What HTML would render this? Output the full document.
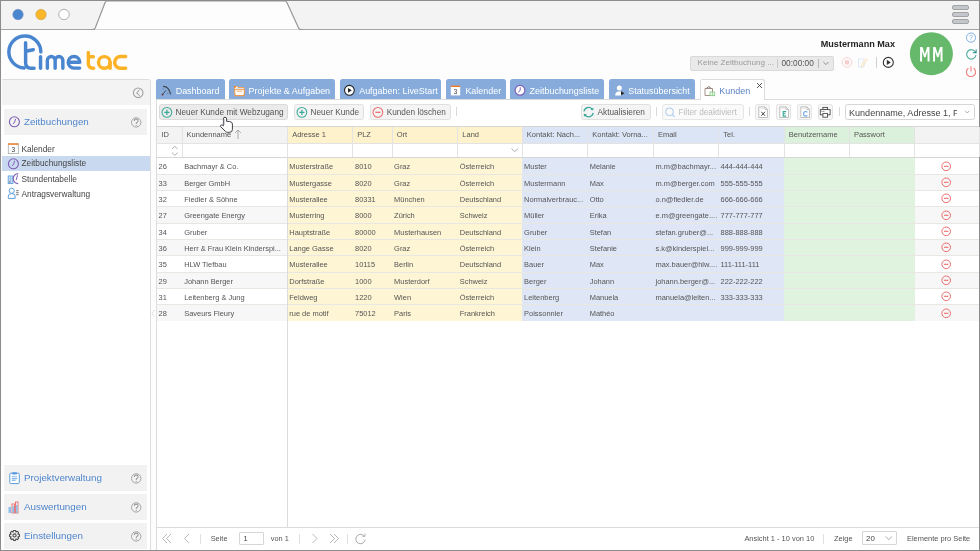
<!DOCTYPE html>
<html><head><meta charset="utf-8"><style>
html,body{margin:0;padding:0;}
body{width:980px;height:551px;position:relative;overflow:hidden;background:#fff;font-family:"Liberation Sans", sans-serif;}
.b{position:absolute;}
.t{position:absolute;white-space:nowrap;}
#w{position:absolute;left:0;top:0;width:980px;height:551px;will-change:transform;}
</style></head><body><div id="w">
<div class="b" style="left:0.00px;top:0.00px;width:980.00px;height:551.00px;background:#fdfdfd;"></div>
<div class="b" style="left:0.00px;top:0.00px;width:980.00px;height:30.00px;background:#f3f3f3;"></div>
<div class="b" style="left:0.00px;top:28.80px;width:980.00px;height:1.20px;background:#a4a4a4;"></div>
<svg class="b" style="left:0.00px;top:0.00px" width="980" height="31" viewBox="0 0 980 31"><path d="M93.5 29.5 L105.5 1 L286 1 L300 29.5 Z" fill="#fdfdfd"/><path d="M91 29.5 L93 29.5 Q94.5 29.5 95.2 28 L105.2 2.2 Q105.8 1 107 1 L285 1 Q286.2 1 286.8 2.2 L298.6 28 Q299.3 29.5 301 29.5 L303 29.5" fill="none" stroke="#969696" stroke-width="1.2"/></svg>
<div class="b" style="left:0.00px;top:0.00px;width:980.00px;height:1.30px;background:#8c8c8c;"></div>
<div class="b" style="left:0.00px;top:0.00px;width:1.30px;height:551.00px;background:#8c8c8c;"></div>
<div class="b" style="left:978.70px;top:0.00px;width:1.30px;height:551.00px;background:#8c8c8c;"></div>
<div class="b" style="left:0.00px;top:549.70px;width:980.00px;height:1.30px;background:#8c8c8c;"></div>
<svg class="b" style="left:8.00px;top:4.00px" width="70" height="22" viewBox="0 0 70 22"><circle cx="10" cy="10.5" r="5.2" fill="#4a86cf" stroke="#6f8fb8" stroke-width="0.6"/><circle cx="33" cy="10.5" r="5.2" fill="#fbb72a" stroke="#c9a050" stroke-width="0.6"/><circle cx="56" cy="10.5" r="5.2" fill="#fff" stroke="#9a9a9a" stroke-width="0.8"/></svg>
<div class="b" style="left:952.00px;top:5.30px;width:17.00px;height:4.60px;background:#c4c7cc;border:1px solid #a3a3a3;border-radius:2px;box-sizing:border-box;"></div>
<div class="b" style="left:952.00px;top:12.20px;width:17.00px;height:4.60px;background:#c4c7cc;border:1px solid #a3a3a3;border-radius:2px;box-sizing:border-box;"></div>
<div class="b" style="left:952.00px;top:19.20px;width:17.00px;height:4.60px;background:#c4c7cc;border:1px solid #a3a3a3;border-radius:2px;box-sizing:border-box;"></div>
<svg class="b" style="left:0;top:0" width="140" height="80" viewBox="0 0 140 80"><g fill="none" stroke-width="3.45" stroke-linecap="round" stroke-linejoin="round"><path stroke="#4a86cf" d="M40.85 51.9 A16 16 0 1 0 24.2 67.95"/><path stroke="#4a86cf" d="M25.6 42.8 L25.6 62.8 Q25.6 68.2 31 68.2 L34.1 68.2 M25.6 51.3 L33.3 49.7"/><path stroke="#4a86cf" d="M40.55 56.8 L40.55 68.2"/><path stroke="#4a86cf" d="M47.35 68.2 L47.35 60.4 A3.9 3.9 0 0 1 55.15 60.4 L55.15 68.2 M55.15 60.4 A3.85 3.85 0 0 1 62.85 60.4 L62.85 68.2"/><path stroke="#4a86cf" d="M68.2 62.3 L79.8 62.3 A5.8 5.8 0 1 0 74 68.1 L79.6 68.1"/><path stroke="#fbb225" d="M88.35 52.4 L88.35 63.3 Q88.35 68.3 93.3 68.3 L93.7 68.3 M88.35 56.8 L93.4 56.8"/><circle stroke="#fbb225" cx="104.3" cy="62.4" r="5.8"/><path stroke="#fbb225" d="M110.1 62.4 L110.1 68.2"/><path stroke="#fbb225" d="M125.65 56.55 L120.5 56.55 A5.85 5.85 0 0 0 120.5 68.25 L125.65 68.25"/></g></svg>
<div class="t" style="left:820.70px;top:39.60px;font-size:9.100px;line-height:9.100px;color:#222;font-weight:bold;">Mustermann Max</div>
<div class="b" style="left:690.40px;top:55.70px;width:143.60px;height:14.90px;background:#e9e9e9;border:1px solid #d9d9d9;border-radius:2px;box-sizing:border-box;"></div>
<div class="t" style="left:697.60px;top:59.34px;font-size:8.100px;line-height:8.100px;color:#9a9a9a;font-weight:normal;">Keine Zeitbuchung ...</div>
<div class="b" style="left:777.20px;top:58.50px;width:0.80px;height:9.50px;background:#c8c8c8;"></div>
<div class="t" style="left:781.50px;top:59.17px;font-size:8.300px;line-height:8.300px;color:#555;font-weight:normal;">00:00:00</div>
<div class="b" style="left:817.50px;top:58.50px;width:1.00px;height:9.50px;background:#b8b8b8;"></div>
<svg class="b" style="left:821.00px;top:59.00px" width="10" height="8" viewBox="0 0 10 8"><path d="M2.4 3 L5 5.6 L7.6 3" fill="none" stroke="#888" stroke-width="0.9"/></svg>
<svg class="b" style="left:841.00px;top:56.00px" width="12" height="12" viewBox="0 0 12 12"><circle cx="6" cy="6.4" r="4.8" fill="none" stroke="#f8cccc" stroke-width="0.9"/><rect x="3.9" y="4.3" width="4.2" height="4.2" fill="#f8cccc"/></svg>
<svg class="b" style="left:856.00px;top:56.00px" width="13" height="13" viewBox="0 0 13 13"><path d="M2.5 3 L8 3 L8 11 L2.5 11 Z" fill="none" stroke="#dae8f6" stroke-width="0.9"/><path d="M5 10 L10 2.5 L11.5 3.5 L6.5 11 Z" fill="none" stroke="#f8e2b4" stroke-width="0.9"/></svg>
<div class="b" style="left:875.50px;top:57.00px;width:1.00px;height:11.00px;background:#d0d0d0;"></div>
<svg class="b" style="left:882.00px;top:56.00px" width="13" height="13" viewBox="0 0 13 13"><circle cx="6.3" cy="6.4" r="5" fill="none" stroke="#333" stroke-width="1.1"/><path d="M4.8 3.8 L8.8 6.4 L4.8 9 Z" fill="#333"/></svg>
<svg class="b" style="left:909.00px;top:32.00px" width="45" height="45" viewBox="0 0 45 45"><circle cx="22.4" cy="21.7" r="21.5" fill="#66b96a"/></svg>
<svg class="b" style="left:0;top:0" width="980" height="80" viewBox="0 0 980 80"><path fill="#fff" d="M920.10 61.60 L920.10 46.90 L922.50 46.90 L924.80 54.20 L927.10 46.90 L929.50 46.90 L929.50 61.60 L927.55 61.60 L927.55 51.20 L925.55 57.20 L924.05 57.20 L922.05 51.20 L922.05 61.60 Z M933.10 61.60 L933.10 46.90 L935.50 46.90 L937.80 54.20 L940.10 46.90 L942.50 46.90 L942.50 61.60 L940.55 61.60 L940.55 51.20 L938.55 57.20 L937.05 57.20 L935.05 51.20 L935.05 61.60 Z"/></svg>
<svg class="b" style="left:964.00px;top:30.00px" width="14" height="50" viewBox="0 0 14 50"><circle cx="7" cy="7.6" r="4.6" fill="none" stroke="#7db0e6" stroke-width="1"/><text x="7" y="10.3" font-size="7" text-anchor="middle" fill="#7db0e6" font-family="Liberation Sans">?</text><path d="M12 25.1 A4.7 4.7 0 1 1 11.15 21.6" fill="none" stroke="#4aaa9c" stroke-width="1.1"/><path d="M8.8 22.6 L12.2 22.6 L12.2 19.2" fill="none" stroke="#4aaa9c" stroke-width="1.1"/><circle cx="11.6" cy="22.1" r="0.7" fill="#1a5a80"/><path d="M4.4 38.3 A4.6 4.6 0 1 0 9.6 38.3" fill="none" stroke="#ef7f7f" stroke-width="1.1"/><path d="M7 36.2 L7 41.5" stroke="#ef7f7f" stroke-width="1.1"/></svg>
<div class="b" style="left:1.50px;top:79.30px;width:149.00px;height:470.70px;background:#fff;border-top:1px solid #dedede;border-right:1px solid #dedede;border-top-right-radius:3px;box-sizing:border-box;"></div>
<div class="b" style="left:1.50px;top:80.30px;width:148.00px;height:24.90px;background:#f3f3f3;"></div>
<svg class="b" style="left:131.00px;top:86.00px" width="14" height="14" viewBox="0 0 14 14"><circle cx="7.2" cy="6.8" r="4.8" fill="none" stroke="#a0a0a0" stroke-width="1.05"/><path d="M8.6 3.9 L5.6 6.85 L8.6 9.7" fill="none" stroke="#8a8a8a" stroke-width="1"/></svg>
<div class="b" style="left:4.00px;top:108.80px;width:143.00px;height:25.80px;background:#f2f2f2;"></div>
<div class="t" style="left:24.00px;top:117.00px;font-size:9.800px;line-height:9.800px;color:#4f86cc;font-weight:normal;">Zeitbuchungen</div>
<svg class="b" style="left:129.00px;top:114.70px" width="14" height="14" viewBox="0 0 14 14"><circle cx="7.2" cy="7.4" r="4.7" fill="none" stroke="#a5a5a5" stroke-width="1"/><path d="M5.3 5.9 Q5.3 4.1 7.2 4.1 Q9.1 4.1 9.1 5.8 Q9.1 6.9 7.9 7.5 Q7.2 7.9 7.2 8.9" fill="none" stroke="#999" stroke-width="1.05"/><circle cx="7.2" cy="10.3" r="0.65" fill="#999"/></svg>
<svg class="b" style="left:7.00px;top:114.70px" width="16" height="14" viewBox="0 0 16 14"><circle cx="7.4" cy="6.8" r="5" fill="none" stroke="#7e5fb5" stroke-width="1.1"/><path d="M8.5 3.8 Q8.3 6.8 6.3 8.9" fill="none" stroke="#7e5fb5" stroke-width="1"/></svg>
<div class="b" style="left:4.00px;top:465.10px;width:143.00px;height:26.10px;background:#f2f2f2;"></div>
<div class="t" style="left:24.00px;top:473.45px;font-size:9.800px;line-height:9.800px;color:#4f86cc;font-weight:normal;">Projektverwaltung</div>
<svg class="b" style="left:129.00px;top:471.15px" width="14" height="14" viewBox="0 0 14 14"><circle cx="7.2" cy="7.4" r="4.7" fill="none" stroke="#a5a5a5" stroke-width="1"/><path d="M5.3 5.9 Q5.3 4.1 7.2 4.1 Q9.1 4.1 9.1 5.8 Q9.1 6.9 7.9 7.5 Q7.2 7.9 7.2 8.9" fill="none" stroke="#999" stroke-width="1.05"/><circle cx="7.2" cy="10.3" r="0.65" fill="#999"/></svg>
<svg class="b" style="left:7.00px;top:471.15px" width="16" height="14" viewBox="0 0 16 14"><rect x="2.8" y="2.2" width="9.5" height="10.4" rx="1" fill="#fff" stroke="#5b9be0" stroke-width="1"/><rect x="5.2" y="1.2" width="4.7" height="2.3" rx="0.5" fill="#5b9be0"/><path d="M4.8 5.8 H10.3 M4.8 7.6 H10.3 M4.8 9.4 H8.5" stroke="#8ab8ea" stroke-width="1.1"/></svg>
<div class="b" style="left:4.00px;top:493.70px;width:143.00px;height:26.30px;background:#f2f2f2;"></div>
<div class="t" style="left:24.00px;top:502.15px;font-size:9.800px;line-height:9.800px;color:#4f86cc;font-weight:normal;">Auswertungen</div>
<svg class="b" style="left:129.00px;top:499.85px" width="14" height="14" viewBox="0 0 14 14"><circle cx="7.2" cy="7.4" r="4.7" fill="none" stroke="#a5a5a5" stroke-width="1"/><path d="M5.3 5.9 Q5.3 4.1 7.2 4.1 Q9.1 4.1 9.1 5.8 Q9.1 6.9 7.9 7.5 Q7.2 7.9 7.2 8.9" fill="none" stroke="#999" stroke-width="1.05"/><circle cx="7.2" cy="10.3" r="0.65" fill="#999"/></svg>
<svg class="b" style="left:7.00px;top:499.85px" width="16" height="14" viewBox="0 0 16 14"><rect x="1.5" y="7" width="2.5" height="6" fill="#8fc0ea" /><rect x="5" y="4" width="2.5" height="9" fill="none" stroke="#ee6a6a" stroke-width="0.9"/><rect x="8.5" y="2" width="2.5" height="11" fill="none" stroke="#ee6a6a" stroke-width="0.9"/><rect x="5.4" y="6" width="1.7" height="7" fill="#8fc0ea"/><rect x="8.9" y="5" width="1.7" height="8" fill="#8fc0ea"/></svg>
<div class="b" style="left:4.00px;top:522.60px;width:143.00px;height:26.90px;background:#f2f2f2;"></div>
<div class="t" style="left:24.00px;top:531.35px;font-size:9.800px;line-height:9.800px;color:#4f86cc;font-weight:normal;">Einstellungen</div>
<svg class="b" style="left:129.00px;top:529.05px" width="14" height="14" viewBox="0 0 14 14"><circle cx="7.2" cy="7.4" r="4.7" fill="none" stroke="#a5a5a5" stroke-width="1"/><path d="M5.3 5.9 Q5.3 4.1 7.2 4.1 Q9.1 4.1 9.1 5.8 Q9.1 6.9 7.9 7.5 Q7.2 7.9 7.2 8.9" fill="none" stroke="#999" stroke-width="1.05"/><circle cx="7.2" cy="10.3" r="0.65" fill="#999"/></svg>
<svg class="b" style="left:7.00px;top:529.05px" width="16" height="14" viewBox="0 0 16 14"><path d="M10.91 4.95 L12.44 5.50 L12.44 7.40 L10.91 7.95 L10.98 7.78 L11.68 9.25 L10.33 10.60 L8.86 9.90 L9.03 9.83 L8.48 11.36 L6.58 11.36 L6.03 9.83 L6.20 9.90 L4.73 10.60 L3.38 9.25 L4.08 7.78 L4.15 7.95 L2.62 7.40 L2.62 5.50 L4.15 4.95 L4.08 5.12 L3.38 3.65 L4.73 2.30 L6.20 3.00 L6.03 3.07 L6.58 1.54 L8.48 1.54 L9.03 3.07 L8.86 3.00 L10.33 2.30 L11.68 3.65 L10.98 5.12 Z" fill="none" stroke="#4a4a4a" stroke-width="1.1" stroke-linejoin="round"/><circle cx="7.53" cy="6.45" r="1.6" fill="none" stroke="#4a4a4a" stroke-width="1.1"/></svg>
<div class="b" style="left:1.50px;top:156.00px;width:148.50px;height:15.00px;background:#c9daf0;"></div>
<div class="t" style="left:21.50px;top:144.97px;font-size:8.300px;line-height:8.300px;color:#444;font-weight:normal;">Kalender</div>
<div class="t" style="left:21.50px;top:159.47px;font-size:8.300px;line-height:8.300px;color:#444;font-weight:normal;">Zeitbuchungsliste</div>
<div class="t" style="left:21.50px;top:174.67px;font-size:8.300px;line-height:8.300px;color:#444;font-weight:normal;">Stundentabelle</div>
<div class="t" style="left:21.50px;top:190.17px;font-size:8.300px;line-height:8.300px;color:#444;font-weight:normal;">Antragsverwaltung</div>
<svg class="b" style="left:7.00px;top:142.00px" width="13" height="13" viewBox="0 0 13 13"><rect x="1.3" y="1.8" width="10" height="9.8" fill="#fff" stroke="#aaa" stroke-width="0.8"/><rect x="1" y="1.3" width="10.6" height="1.6" fill="#f08a3c"/><text x="6.3" y="10" font-size="6.5" text-anchor="middle" fill="#333" font-family="Liberation Sans">3</text></svg>
<svg class="b" style="left:6.00px;top:156.80px" width="14" height="14" viewBox="0 0 14 14"><circle cx="7.4" cy="6.8" r="5" fill="none" stroke="#7e5fb5" stroke-width="1.1"/><path d="M8.5 3.8 Q8.3 6.8 6.3 8.9" fill="none" stroke="#7e5fb5" stroke-width="1"/></svg>
<svg class="b" style="left:6.00px;top:171.00px" width="16" height="14" viewBox="0 0 16 14"><rect x="2.2" y="5" width="4.8" height="7.5" fill="#cfe3f6" stroke="#5ea0e0" stroke-width="0.9"/><path d="M2.2 7.6 H7 M2.2 10 H7 M4.6 5 V12.5" stroke="#8ab8e8" stroke-width="0.6"/><rect x="3" y="10.3" width="1.4" height="1.5" fill="#9a8f80"/><path d="M12.2 2.6 A5 5 0 0 0 12.2 12.6" fill="none" stroke="#7e5fb5" stroke-width="1.1"/><path d="M11.5 4.2 L10.2 9" fill="none" stroke="#7e5fb5" stroke-width="1"/></svg>
<svg class="b" style="left:6.00px;top:186.00px" width="16" height="14" viewBox="0 0 16 14"><circle cx="5.7" cy="4.8" r="2.6" fill="none" stroke="#5ea0e0" stroke-width="1"/><path d="M2.3 12.4 L2.3 10 Q2.3 7.6 5.7 7.6 Q9.1 7.6 9.1 10 L9.1 12.4 Z" fill="none" stroke="#5ea0e0" stroke-width="1"/><path d="M10.2 4.6 H12.6 M10.2 6.6 H12.6 M10.2 8.6 H12.6" stroke="#8a8a8a" stroke-width="1.1"/></svg>
<div class="b" style="left:156.00px;top:79.40px;width:69.00px;height:20.10px;background:#87acdb;border-radius:2.5px 2.5px 0 0;"></div>
<div class="t" style="left:175.70px;top:87.02px;font-size:8.950px;line-height:8.950px;color:#fff;font-weight:normal;">Dashboard</div>
<div class="b" style="left:229.00px;top:79.40px;width:106.20px;height:20.10px;background:#87acdb;border-radius:2.5px 2.5px 0 0;"></div>
<div class="t" style="left:248.60px;top:87.02px;font-size:8.950px;line-height:8.950px;color:#fff;font-weight:normal;">Projekte &amp; Aufgaben</div>
<div class="b" style="left:339.70px;top:79.40px;width:101.20px;height:20.10px;background:#87acdb;border-radius:2.5px 2.5px 0 0;"></div>
<div class="t" style="left:359.20px;top:87.02px;font-size:8.950px;line-height:8.950px;color:#fff;font-weight:normal;">Aufgaben: LiveStart</div>
<div class="b" style="left:445.50px;top:79.40px;width:60.40px;height:20.10px;background:#87acdb;border-radius:2.5px 2.5px 0 0;"></div>
<div class="t" style="left:465.40px;top:87.02px;font-size:8.950px;line-height:8.950px;color:#fff;font-weight:normal;">Kalender</div>
<div class="b" style="left:510.00px;top:79.40px;width:94.40px;height:20.10px;background:#87acdb;border-radius:2.5px 2.5px 0 0;"></div>
<div class="t" style="left:529.60px;top:87.02px;font-size:8.950px;line-height:8.950px;color:#fff;font-weight:normal;">Zeitbuchungsliste</div>
<div class="b" style="left:609.00px;top:79.40px;width:85.80px;height:20.10px;background:#87acdb;border-radius:2.5px 2.5px 0 0;"></div>
<div class="t" style="left:628.20px;top:87.02px;font-size:8.950px;line-height:8.950px;color:#fff;font-weight:normal;">Statusübersicht</div>
<svg class="b" style="left:159.00px;top:83.00px" width="14" height="14" viewBox="0 0 14 14"><path d="M4.5 3.3 Q9.5 3.5 11.6 10.8" fill="none" stroke="#3f4650" stroke-width="1.2" stroke-linecap="round"/><path d="M3.5 11.6 L7 7.3" stroke="#3a3f48" stroke-width="0.9"/><circle cx="3.5" cy="11.6" r="0.9" fill="#5a2a20"/><circle cx="4" cy="6" r="0.5" fill="#556"/><circle cx="8.8" cy="10.5" r="0.5" fill="#556"/></svg>
<svg class="b" style="left:232.00px;top:83.00px" width="14" height="15" viewBox="0 0 14 15"><path d="M2.6 3.6 L5.2 3.6 L6 4.5 L12 4.5 L12 7 L2.6 7 Z" fill="#fff" stroke="#f0a050" stroke-width="0.9"/><path d="M4.2 5.7 H11" stroke="#c8c8c8" stroke-width="0.7"/><path d="M2.4 6.8 L12.6 6.8 L11.9 12.6 L3.1 12.6 Z" fill="#fff" stroke="#ec9a50" stroke-width="1.1"/><path d="M5 8.6 H10" stroke="#f2b070" stroke-width="0.9"/><circle cx="2.9" cy="4" r="0.9" fill="#f57a1f"/></svg>
<svg class="b" style="left:343.00px;top:84.00px" width="13" height="13" viewBox="0 0 13 13"><circle cx="6.4" cy="6.3" r="4.9" fill="#fff" stroke="#222" stroke-width="1.1"/><path d="M5 3.9 L8.8 6.3 L5 8.7 Z" fill="#222"/></svg>
<svg class="b" style="left:449.00px;top:84.00px" width="13" height="13" viewBox="0 0 13 13"><rect x="1.8" y="2.4" width="9.4" height="9" fill="#fff"/><rect x="1.8" y="1.6" width="9.4" height="1.4" fill="#f07a2a"/><text x="6.5" y="10.2" font-size="6.3" text-anchor="middle" fill="#333" font-family="Liberation Sans">3</text></svg>
<svg class="b" style="left:513.00px;top:83.00px" width="14" height="14" viewBox="0 0 14 14"><circle cx="7" cy="7.3" r="4.9" fill="#fff" stroke="#7e5fb5" stroke-width="1.2"/><path d="M7.3 4.3 L7.1 7.6 L5.3 9.3" fill="none" stroke="#7e5fb5" stroke-width="1"/></svg>
<svg class="b" style="left:613.00px;top:83.00px" width="14" height="15" viewBox="0 0 14 15"><circle cx="6.3" cy="5" r="2.5" fill="#fff"/><path d="M2.2 12.5 Q2.2 8.5 6 8.5 L8 8.5 L8 12.5 Z" fill="#fff"/><path d="M8 8.2 L11.5 10.2 L8 12.2 Z" fill="#2a2020"/></svg>
<div class="b" style="left:699.70px;top:79.40px;width:65.60px;height:20.60px;background:#fff;border:1px solid #dcdcdc;border-bottom:none;border-radius:2.5px 2.5px 0 0;box-sizing:border-box;"></div>
<div class="t" style="left:719.30px;top:86.82px;font-size:8.950px;line-height:8.950px;color:#5b82c6;font-weight:normal;">Kunden</div>
<svg class="b" style="left:754.00px;top:80.00px" width="11" height="10" viewBox="0 0 11 10"><path d="M3 3 L8 8 M8 3 L3 8" stroke="#444" stroke-width="0.9"/></svg>
<svg class="b" style="left:702.00px;top:83.00px" width="16" height="15" viewBox="0 0 16 15"><path d="M3 5.5 L10.5 5.5 L10.5 12.5 L3 12.5 Z" fill="#fff" stroke="#a89088" stroke-width="1"/><path d="M4.5 5.5 Q6.8 2 9 5.5" fill="none" stroke="#7a6a5a" stroke-width="1"/><rect x="7.6" y="8.6" width="5.5" height="4.5" fill="#8fd08f"/><rect x="8.6" y="9.6" width="1.4" height="2.2" fill="#fff"/><rect x="10.8" y="9.6" width="1.4" height="2.2" fill="#fff"/></svg>
<div class="b" style="left:156.00px;top:99.30px;width:823.00px;height:450.70px;background:#fff;border-left:1px solid #dcdcdc;box-sizing:border-box;"></div>
<div class="b" style="left:156.00px;top:99.30px;width:823.00px;height:1.00px;background:#dcdcdc;"></div>
<div class="b" style="left:700.70px;top:99.30px;width:63.60px;height:1.00px;background:#fff;"></div>
<div class="b" style="left:158.70px;top:104.20px;width:129.60px;height:15.40px;background:#ebebeb;border:1px solid #dadada;border-radius:2.5px;box-sizing:border-box;"></div>
<div class="t" style="left:175.50px;top:108.72px;font-size:8.250px;line-height:8.250px;color:#555;font-weight:normal;">Neuer Kunde mit Webzugang</div>
<svg class="b" style="left:159.70px;top:104.50px" width="14" height="14" viewBox="0 0 14 14"><circle cx="6.9" cy="7.3" r="4.9" fill="none" stroke="#3aa898" stroke-width="1.05"/><path d="M6.9 4.7 V9.9 M4.3 7.3 H9.5" stroke="#3aa898" stroke-width="1.25"/></svg>
<div class="b" style="left:293.90px;top:104.20px;width:70.50px;height:15.40px;background:#f4f4f4;border:1px solid #e0e0e0;border-radius:2.5px;box-sizing:border-box;"></div>
<div class="t" style="left:310.50px;top:108.72px;font-size:8.250px;line-height:8.250px;color:#555;font-weight:normal;">Neuer Kunde</div>
<svg class="b" style="left:294.90px;top:104.50px" width="14" height="14" viewBox="0 0 14 14"><circle cx="6.9" cy="7.3" r="4.9" fill="none" stroke="#3aa898" stroke-width="1.05"/><path d="M6.9 4.7 V9.9 M4.3 7.3 H9.5" stroke="#3aa898" stroke-width="1.25"/></svg>
<div class="b" style="left:370.00px;top:104.20px;width:80.60px;height:15.40px;background:#f4f4f4;border:1px solid #e0e0e0;border-radius:2.5px;box-sizing:border-box;"></div>
<div class="t" style="left:386.70px;top:108.72px;font-size:8.250px;line-height:8.250px;color:#555;font-weight:normal;">Kunden löschen</div>
<svg class="b" style="left:371.00px;top:104.50px" width="14" height="14" viewBox="0 0 14 14"><circle cx="6.9" cy="7.3" r="4.9" fill="none" stroke="#ec6a6a" stroke-width="1.05"/><path d="M4.4 7.3 H9.4" stroke="#ec6a6a" stroke-width="1.25"/></svg>
<div class="b" style="left:456.00px;top:107.30px;width:1.00px;height:9.20px;background:#d9d9d9;"></div>
<div class="b" style="left:581.40px;top:104.20px;width:69.30px;height:15.40px;background:#f4f4f4;border:1px solid #e0e0e0;border-radius:2.5px;box-sizing:border-box;"></div>
<div class="t" style="left:597.60px;top:108.72px;font-size:8.250px;line-height:8.250px;color:#555;font-weight:normal;">Aktualisieren</div>
<svg class="b" style="left:582.40px;top:104.50px" width="14" height="14" viewBox="0 0 14 14"><path d="M1.97 6.28 A4.7 4.7 0 0 1 10.09 3.96" fill="none" stroke="#3aa898" stroke-width="1.25"/><path d="M11.23 7.92 A4.7 4.7 0 0 1 3.11 10.24" fill="none" stroke="#3aa898" stroke-width="1.25"/><path d="M11.36 5.37 L11.30 2.46 L8.48 5.00 Z" fill="#3aa898"/><path d="M1.84 8.83 L1.90 11.74 L4.72 9.20 Z" fill="#3aa898"/></svg>
<div class="b" style="left:656.00px;top:107.30px;width:1.00px;height:9.20px;background:#d9d9d9;"></div>
<div class="b" style="left:662.30px;top:104.20px;width:81.50px;height:15.40px;background:#fafafa;border:1px solid #e6e6e6;border-radius:2.5px;box-sizing:border-box;"></div>
<svg class="b" style="left:663.00px;top:104.50px" width="14" height="14" viewBox="0 0 14 14"><circle cx="6.5" cy="6.8" r="3.9" fill="none" stroke="#a8c8ec" stroke-width="1"/><path d="M9.3 9.6 L11.6 11.9" stroke="#a8c8ec" stroke-width="1.1"/></svg>
<div class="t" style="left:678.50px;top:108.72px;font-size:8.250px;line-height:8.250px;color:#bdbdbd;font-weight:normal;">Filter deaktiviert</div>
<div class="b" style="left:749.20px;top:107.30px;width:1.00px;height:9.20px;background:#d9d9d9;"></div>
<div class="b" style="left:755.00px;top:104.20px;width:15.40px;height:15.40px;background:#f7f7f7;border:1px solid #e3e3e3;border-radius:2.5px;box-sizing:border-box;"></div>
<svg class="b" style="left:755.50px;top:104.50px" width="14" height="14" viewBox="0 0 14 14"><path d="M2.8 1.9 L8.9 1.9 L11.5 4.5 L11.5 12.5 L2.8 12.5 Z" fill="#fff" stroke="#b0b0b0" stroke-width="0.8"/><path d="M8.9 1.9 L8.9 4.5 L11.5 4.5" fill="none" stroke="#b0b0b0" stroke-width="0.7"/><path d="M4 3.3 H8" stroke="#d0d0d0" stroke-width="0.6"/><path d="M5.3 6.8 L9 10.8 M9 6.8 L5.3 10.8" stroke="#333" stroke-width="0.9"/></svg>
<div class="b" style="left:776.20px;top:104.20px;width:14.80px;height:15.40px;background:#f7f7f7;border:1px solid #e3e3e3;border-radius:2.5px;box-sizing:border-box;"></div>
<svg class="b" style="left:776.70px;top:104.50px" width="14" height="14" viewBox="0 0 14 14"><path d="M2.8 1.9 L8.9 1.9 L11.5 4.5 L11.5 12.5 L2.8 12.5 Z" fill="#fff" stroke="#b0b0b0" stroke-width="0.8"/><path d="M8.9 1.9 L8.9 4.5 L11.5 4.5" fill="none" stroke="#b0b0b0" stroke-width="0.7"/><path d="M4 3.3 H8" stroke="#d0d0d0" stroke-width="0.6"/><path d="M9.2 6.6 L6.2 6.6 L6.2 11.1 L9.2 11.1 M6.2 8.8 L8.6 8.8" fill="none" stroke="#3aa898" stroke-width="1.1"/></svg>
<div class="b" style="left:797.00px;top:104.20px;width:15.10px;height:15.40px;background:#f7f7f7;border:1px solid #e3e3e3;border-radius:2.5px;box-sizing:border-box;"></div>
<svg class="b" style="left:797.50px;top:104.50px" width="14" height="14" viewBox="0 0 14 14"><path d="M2.8 1.9 L8.9 1.9 L11.5 4.5 L11.5 12.5 L2.8 12.5 Z" fill="#fff" stroke="#b0b0b0" stroke-width="0.8"/><path d="M8.9 1.9 L8.9 4.5 L11.5 4.5" fill="none" stroke="#b0b0b0" stroke-width="0.7"/><path d="M4 3.3 H8" stroke="#d0d0d0" stroke-width="0.6"/><path d="M9.3 7.3 Q8.7 6.5 7.7 6.5 Q5.6 6.5 5.6 8.8 Q5.6 11.1 7.7 11.1 Q8.7 11.1 9.3 10.3" fill="none" stroke="#6aa8e8" stroke-width="1.1"/></svg>
<div class="b" style="left:817.70px;top:104.20px;width:15.30px;height:15.40px;background:#f7f7f7;border:1px solid #e3e3e3;border-radius:2.5px;box-sizing:border-box;"></div>
<svg class="b" style="left:818.30px;top:104.50px" width="14" height="14" viewBox="0 0 14 14"><rect x="4.9" y="2.4" width="4.6" height="2.2" fill="none" stroke="#4a4a4a" stroke-width="0.9"/><rect x="2.3" y="4.6" width="9.8" height="5.2" fill="#fff" stroke="#4a4a4a" stroke-width="0.9"/><rect x="4.9" y="8.4" width="4.6" height="3.8" fill="#fff" stroke="#4a4a4a" stroke-width="0.9"/><circle cx="4" cy="6.2" r="0.5" fill="#333"/><circle cx="5.9" cy="6.2" r="0.5" fill="#333"/></svg>
<div class="b" style="left:838.60px;top:107.30px;width:1.00px;height:9.20px;background:#d9d9d9;"></div>
<div class="b" style="left:844.50px;top:104.00px;width:130.20px;height:16.00px;background:#fff;border:1px solid #d6d6d6;border-radius:2.5px;box-sizing:border-box;"></div>
<div class="t" style="left:849px;top:105.5px;width:107.5px;overflow:hidden;white-space:nowrap;font-size:9.05px;line-height:14px;color:#444;">Kundenname, Adresse 1, Plz, Ort</div>
<svg class="b" style="left:962.00px;top:108.00px" width="10" height="8" viewBox="0 0 10 8"><path d="M3 2.8 L5.2 5 L7.4 2.8" fill="none" stroke="#999" stroke-width="0.8"/></svg>
<div class="b" style="left:156.00px;top:125.80px;width:823.00px;height:1.20px;background:#d6d6d6;"></div>
<div class="b" style="left:157.00px;top:127.00px;width:25.10px;height:15.50px;background:#f3f3f3;"></div>
<div class="b" style="left:182.10px;top:127.00px;width:105.60px;height:15.50px;background:#f3f3f3;"></div>
<div class="b" style="left:287.70px;top:127.00px;width:65.00px;height:15.50px;background:#fdf2cb;"></div>
<div class="b" style="left:352.70px;top:127.00px;width:39.50px;height:15.50px;background:#fdf2cb;"></div>
<div class="b" style="left:392.20px;top:127.00px;width:65.60px;height:15.50px;background:#fdf2cb;"></div>
<div class="b" style="left:457.80px;top:127.00px;width:64.50px;height:15.50px;background:#fdf2cb;"></div>
<div class="b" style="left:522.30px;top:127.00px;width:65.50px;height:15.50px;background:#dce5f5;"></div>
<div class="b" style="left:587.80px;top:127.00px;width:65.60px;height:15.50px;background:#dce5f5;"></div>
<div class="b" style="left:653.40px;top:127.00px;width:65.40px;height:15.50px;background:#dce5f5;"></div>
<div class="b" style="left:718.80px;top:127.00px;width:65.50px;height:15.50px;background:#dce5f5;"></div>
<div class="b" style="left:784.30px;top:127.00px;width:65.10px;height:15.50px;background:#dcf1dc;"></div>
<div class="b" style="left:849.40px;top:127.00px;width:65.40px;height:15.50px;background:#dcf1dc;"></div>
<div class="b" style="left:914.80px;top:127.00px;width:64.20px;height:15.50px;background:#f3f3f3;"></div>
<div class="b" style="left:181.60px;top:127.00px;width:1.00px;height:30.20px;background:#e3e3e3;"></div>
<div class="t" style="left:161.50px;top:131.35px;font-size:7.500px;line-height:7.500px;color:#555;font-weight:normal;">ID</div>
<div class="b" style="left:287.20px;top:127.00px;width:1.00px;height:30.20px;background:#e3e3e3;"></div>
<div class="t" style="left:186.60px;top:131.35px;font-size:7.500px;line-height:7.500px;color:#555;font-weight:normal;">Kundenname</div>
<div class="b" style="left:352.20px;top:127.00px;width:1.00px;height:30.20px;background:#e3e3e3;"></div>
<div class="t" style="left:292.20px;top:131.35px;font-size:7.500px;line-height:7.500px;color:#555;font-weight:normal;">Adresse 1</div>
<div class="b" style="left:391.70px;top:127.00px;width:1.00px;height:30.20px;background:#e3e3e3;"></div>
<div class="t" style="left:357.20px;top:131.35px;font-size:7.500px;line-height:7.500px;color:#555;font-weight:normal;">PLZ</div>
<div class="b" style="left:457.30px;top:127.00px;width:1.00px;height:30.20px;background:#e3e3e3;"></div>
<div class="t" style="left:396.70px;top:131.35px;font-size:7.500px;line-height:7.500px;color:#555;font-weight:normal;">Ort</div>
<div class="b" style="left:521.80px;top:127.00px;width:1.00px;height:30.20px;background:#e3e3e3;"></div>
<div class="t" style="left:462.30px;top:131.35px;font-size:7.500px;line-height:7.500px;color:#555;font-weight:normal;">Land</div>
<div class="b" style="left:587.30px;top:127.00px;width:1.00px;height:30.20px;background:#e3e3e3;"></div>
<div class="t" style="left:526.80px;top:131.35px;font-size:7.500px;line-height:7.500px;color:#555;font-weight:normal;">Kontakt: Nach...</div>
<div class="b" style="left:652.90px;top:127.00px;width:1.00px;height:30.20px;background:#e3e3e3;"></div>
<div class="t" style="left:592.30px;top:131.35px;font-size:7.500px;line-height:7.500px;color:#555;font-weight:normal;">Kontakt: Vorna...</div>
<div class="b" style="left:718.30px;top:127.00px;width:1.00px;height:30.20px;background:#e3e3e3;"></div>
<div class="t" style="left:657.90px;top:131.35px;font-size:7.500px;line-height:7.500px;color:#555;font-weight:normal;">Email</div>
<div class="b" style="left:783.80px;top:127.00px;width:1.00px;height:30.20px;background:#e3e3e3;"></div>
<div class="t" style="left:723.30px;top:131.35px;font-size:7.500px;line-height:7.500px;color:#555;font-weight:normal;">Tel.</div>
<div class="b" style="left:848.90px;top:127.00px;width:1.00px;height:30.20px;background:#e3e3e3;"></div>
<div class="t" style="left:788.80px;top:131.35px;font-size:7.500px;line-height:7.500px;color:#555;font-weight:normal;">Benutzername</div>
<div class="b" style="left:914.30px;top:127.00px;width:1.00px;height:30.20px;background:#e3e3e3;"></div>
<div class="t" style="left:853.90px;top:131.35px;font-size:7.500px;line-height:7.500px;color:#555;font-weight:normal;">Passwort</div>
<div class="b" style="left:978.50px;top:127.00px;width:1.00px;height:30.20px;background:#e3e3e3;"></div>
<div class="b" style="left:156.00px;top:142.50px;width:823.00px;height:1.00px;background:#e3e3e3;"></div>
<div class="b" style="left:156.00px;top:156.70px;width:823.00px;height:1.10px;background:#d6d6d6;"></div>
<svg class="b" style="left:233.00px;top:128.00px" width="10" height="13" viewBox="0 0 10 13"><path d="M5 2 L5 11 M2 5 L5 2 L8 5" fill="none" stroke="#999" stroke-width="0.8"/></svg>
<svg class="b" style="left:170.00px;top:143.50px" width="10" height="13" viewBox="0 0 10 13"><path d="M2 5 L4.8 2.3 L7.6 5 M2 8.6 L4.8 11.3 L7.6 8.6" fill="none" stroke="#999" stroke-width="0.8"/></svg>
<svg class="b" style="left:510.00px;top:146.00px" width="10" height="8" viewBox="0 0 10 8"><path d="M1.5 2.5 L4.8 5.6 L8.1 2.5" fill="none" stroke="#999" stroke-width="0.8"/></svg>
<svg class="b" style="left:511.00px;top:146.00px" width="0" height="0" viewBox="0 0 0 0"></svg>
<div class="b" style="left:157.00px;top:157.80px;width:130.70px;height:16.33px;background:#fff;"></div>
<div class="b" style="left:914.80px;top:157.80px;width:64.20px;height:16.33px;background:#fff;"></div>
<div class="b" style="left:287.70px;top:157.80px;width:65.00px;height:16.33px;background:#fef5d4;"></div>
<div class="b" style="left:352.70px;top:157.80px;width:39.50px;height:16.33px;background:#fef5d4;"></div>
<div class="b" style="left:392.20px;top:157.80px;width:65.60px;height:16.33px;background:#fef5d4;"></div>
<div class="b" style="left:457.80px;top:157.80px;width:64.50px;height:16.33px;background:#fef5d4;"></div>
<div class="b" style="left:522.30px;top:157.80px;width:65.50px;height:16.33px;background:#dfe7f6;"></div>
<div class="b" style="left:587.80px;top:157.80px;width:65.60px;height:16.33px;background:#dfe7f6;"></div>
<div class="b" style="left:653.40px;top:157.80px;width:65.40px;height:16.33px;background:#dfe7f6;"></div>
<div class="b" style="left:718.80px;top:157.80px;width:65.50px;height:16.33px;background:#dfe7f6;"></div>
<div class="b" style="left:784.30px;top:157.80px;width:65.10px;height:16.33px;background:#dff3df;"></div>
<div class="b" style="left:849.40px;top:157.80px;width:65.40px;height:16.33px;background:#dff3df;"></div>
<div class="b" style="left:157.00px;top:174.13px;width:130.70px;height:16.33px;background:#f7f7f7;"></div>
<div class="b" style="left:914.80px;top:174.13px;width:64.20px;height:16.33px;background:#f7f7f7;"></div>
<div class="b" style="left:287.70px;top:174.13px;width:65.00px;height:16.33px;background:#fef5d4;"></div>
<div class="b" style="left:352.70px;top:174.13px;width:39.50px;height:16.33px;background:#fef5d4;"></div>
<div class="b" style="left:392.20px;top:174.13px;width:65.60px;height:16.33px;background:#fef5d4;"></div>
<div class="b" style="left:457.80px;top:174.13px;width:64.50px;height:16.33px;background:#fef5d4;"></div>
<div class="b" style="left:522.30px;top:174.13px;width:65.50px;height:16.33px;background:#dfe7f6;"></div>
<div class="b" style="left:587.80px;top:174.13px;width:65.60px;height:16.33px;background:#dfe7f6;"></div>
<div class="b" style="left:653.40px;top:174.13px;width:65.40px;height:16.33px;background:#dfe7f6;"></div>
<div class="b" style="left:718.80px;top:174.13px;width:65.50px;height:16.33px;background:#dfe7f6;"></div>
<div class="b" style="left:784.30px;top:174.13px;width:65.10px;height:16.33px;background:#dff3df;"></div>
<div class="b" style="left:849.40px;top:174.13px;width:65.40px;height:16.33px;background:#dff3df;"></div>
<div class="b" style="left:157.00px;top:190.47px;width:130.70px;height:16.33px;background:#fff;"></div>
<div class="b" style="left:914.80px;top:190.47px;width:64.20px;height:16.33px;background:#fff;"></div>
<div class="b" style="left:287.70px;top:190.47px;width:65.00px;height:16.33px;background:#fef5d4;"></div>
<div class="b" style="left:352.70px;top:190.47px;width:39.50px;height:16.33px;background:#fef5d4;"></div>
<div class="b" style="left:392.20px;top:190.47px;width:65.60px;height:16.33px;background:#fef5d4;"></div>
<div class="b" style="left:457.80px;top:190.47px;width:64.50px;height:16.33px;background:#fef5d4;"></div>
<div class="b" style="left:522.30px;top:190.47px;width:65.50px;height:16.33px;background:#dfe7f6;"></div>
<div class="b" style="left:587.80px;top:190.47px;width:65.60px;height:16.33px;background:#dfe7f6;"></div>
<div class="b" style="left:653.40px;top:190.47px;width:65.40px;height:16.33px;background:#dfe7f6;"></div>
<div class="b" style="left:718.80px;top:190.47px;width:65.50px;height:16.33px;background:#dfe7f6;"></div>
<div class="b" style="left:784.30px;top:190.47px;width:65.10px;height:16.33px;background:#dff3df;"></div>
<div class="b" style="left:849.40px;top:190.47px;width:65.40px;height:16.33px;background:#dff3df;"></div>
<div class="b" style="left:157.00px;top:206.80px;width:130.70px;height:16.33px;background:#f7f7f7;"></div>
<div class="b" style="left:914.80px;top:206.80px;width:64.20px;height:16.33px;background:#f7f7f7;"></div>
<div class="b" style="left:287.70px;top:206.80px;width:65.00px;height:16.33px;background:#fef5d4;"></div>
<div class="b" style="left:352.70px;top:206.80px;width:39.50px;height:16.33px;background:#fef5d4;"></div>
<div class="b" style="left:392.20px;top:206.80px;width:65.60px;height:16.33px;background:#fef5d4;"></div>
<div class="b" style="left:457.80px;top:206.80px;width:64.50px;height:16.33px;background:#fef5d4;"></div>
<div class="b" style="left:522.30px;top:206.80px;width:65.50px;height:16.33px;background:#dfe7f6;"></div>
<div class="b" style="left:587.80px;top:206.80px;width:65.60px;height:16.33px;background:#dfe7f6;"></div>
<div class="b" style="left:653.40px;top:206.80px;width:65.40px;height:16.33px;background:#dfe7f6;"></div>
<div class="b" style="left:718.80px;top:206.80px;width:65.50px;height:16.33px;background:#dfe7f6;"></div>
<div class="b" style="left:784.30px;top:206.80px;width:65.10px;height:16.33px;background:#dff3df;"></div>
<div class="b" style="left:849.40px;top:206.80px;width:65.40px;height:16.33px;background:#dff3df;"></div>
<div class="b" style="left:157.00px;top:223.13px;width:130.70px;height:16.33px;background:#fff;"></div>
<div class="b" style="left:914.80px;top:223.13px;width:64.20px;height:16.33px;background:#fff;"></div>
<div class="b" style="left:287.70px;top:223.13px;width:65.00px;height:16.33px;background:#fef5d4;"></div>
<div class="b" style="left:352.70px;top:223.13px;width:39.50px;height:16.33px;background:#fef5d4;"></div>
<div class="b" style="left:392.20px;top:223.13px;width:65.60px;height:16.33px;background:#fef5d4;"></div>
<div class="b" style="left:457.80px;top:223.13px;width:64.50px;height:16.33px;background:#fef5d4;"></div>
<div class="b" style="left:522.30px;top:223.13px;width:65.50px;height:16.33px;background:#dfe7f6;"></div>
<div class="b" style="left:587.80px;top:223.13px;width:65.60px;height:16.33px;background:#dfe7f6;"></div>
<div class="b" style="left:653.40px;top:223.13px;width:65.40px;height:16.33px;background:#dfe7f6;"></div>
<div class="b" style="left:718.80px;top:223.13px;width:65.50px;height:16.33px;background:#dfe7f6;"></div>
<div class="b" style="left:784.30px;top:223.13px;width:65.10px;height:16.33px;background:#dff3df;"></div>
<div class="b" style="left:849.40px;top:223.13px;width:65.40px;height:16.33px;background:#dff3df;"></div>
<div class="b" style="left:157.00px;top:239.46px;width:130.70px;height:16.33px;background:#f7f7f7;"></div>
<div class="b" style="left:914.80px;top:239.46px;width:64.20px;height:16.33px;background:#f7f7f7;"></div>
<div class="b" style="left:287.70px;top:239.46px;width:65.00px;height:16.33px;background:#fef5d4;"></div>
<div class="b" style="left:352.70px;top:239.46px;width:39.50px;height:16.33px;background:#fef5d4;"></div>
<div class="b" style="left:392.20px;top:239.46px;width:65.60px;height:16.33px;background:#fef5d4;"></div>
<div class="b" style="left:457.80px;top:239.46px;width:64.50px;height:16.33px;background:#fef5d4;"></div>
<div class="b" style="left:522.30px;top:239.46px;width:65.50px;height:16.33px;background:#dfe7f6;"></div>
<div class="b" style="left:587.80px;top:239.46px;width:65.60px;height:16.33px;background:#dfe7f6;"></div>
<div class="b" style="left:653.40px;top:239.46px;width:65.40px;height:16.33px;background:#dfe7f6;"></div>
<div class="b" style="left:718.80px;top:239.46px;width:65.50px;height:16.33px;background:#dfe7f6;"></div>
<div class="b" style="left:784.30px;top:239.46px;width:65.10px;height:16.33px;background:#dff3df;"></div>
<div class="b" style="left:849.40px;top:239.46px;width:65.40px;height:16.33px;background:#dff3df;"></div>
<div class="b" style="left:157.00px;top:255.80px;width:130.70px;height:16.33px;background:#fff;"></div>
<div class="b" style="left:914.80px;top:255.80px;width:64.20px;height:16.33px;background:#fff;"></div>
<div class="b" style="left:287.70px;top:255.80px;width:65.00px;height:16.33px;background:#fef5d4;"></div>
<div class="b" style="left:352.70px;top:255.80px;width:39.50px;height:16.33px;background:#fef5d4;"></div>
<div class="b" style="left:392.20px;top:255.80px;width:65.60px;height:16.33px;background:#fef5d4;"></div>
<div class="b" style="left:457.80px;top:255.80px;width:64.50px;height:16.33px;background:#fef5d4;"></div>
<div class="b" style="left:522.30px;top:255.80px;width:65.50px;height:16.33px;background:#dfe7f6;"></div>
<div class="b" style="left:587.80px;top:255.80px;width:65.60px;height:16.33px;background:#dfe7f6;"></div>
<div class="b" style="left:653.40px;top:255.80px;width:65.40px;height:16.33px;background:#dfe7f6;"></div>
<div class="b" style="left:718.80px;top:255.80px;width:65.50px;height:16.33px;background:#dfe7f6;"></div>
<div class="b" style="left:784.30px;top:255.80px;width:65.10px;height:16.33px;background:#dff3df;"></div>
<div class="b" style="left:849.40px;top:255.80px;width:65.40px;height:16.33px;background:#dff3df;"></div>
<div class="b" style="left:157.00px;top:272.13px;width:130.70px;height:16.33px;background:#f7f7f7;"></div>
<div class="b" style="left:914.80px;top:272.13px;width:64.20px;height:16.33px;background:#f7f7f7;"></div>
<div class="b" style="left:287.70px;top:272.13px;width:65.00px;height:16.33px;background:#fef5d4;"></div>
<div class="b" style="left:352.70px;top:272.13px;width:39.50px;height:16.33px;background:#fef5d4;"></div>
<div class="b" style="left:392.20px;top:272.13px;width:65.60px;height:16.33px;background:#fef5d4;"></div>
<div class="b" style="left:457.80px;top:272.13px;width:64.50px;height:16.33px;background:#fef5d4;"></div>
<div class="b" style="left:522.30px;top:272.13px;width:65.50px;height:16.33px;background:#dfe7f6;"></div>
<div class="b" style="left:587.80px;top:272.13px;width:65.60px;height:16.33px;background:#dfe7f6;"></div>
<div class="b" style="left:653.40px;top:272.13px;width:65.40px;height:16.33px;background:#dfe7f6;"></div>
<div class="b" style="left:718.80px;top:272.13px;width:65.50px;height:16.33px;background:#dfe7f6;"></div>
<div class="b" style="left:784.30px;top:272.13px;width:65.10px;height:16.33px;background:#dff3df;"></div>
<div class="b" style="left:849.40px;top:272.13px;width:65.40px;height:16.33px;background:#dff3df;"></div>
<div class="b" style="left:157.00px;top:288.46px;width:130.70px;height:16.33px;background:#fff;"></div>
<div class="b" style="left:914.80px;top:288.46px;width:64.20px;height:16.33px;background:#fff;"></div>
<div class="b" style="left:287.70px;top:288.46px;width:65.00px;height:16.33px;background:#fef5d4;"></div>
<div class="b" style="left:352.70px;top:288.46px;width:39.50px;height:16.33px;background:#fef5d4;"></div>
<div class="b" style="left:392.20px;top:288.46px;width:65.60px;height:16.33px;background:#fef5d4;"></div>
<div class="b" style="left:457.80px;top:288.46px;width:64.50px;height:16.33px;background:#fef5d4;"></div>
<div class="b" style="left:522.30px;top:288.46px;width:65.50px;height:16.33px;background:#dfe7f6;"></div>
<div class="b" style="left:587.80px;top:288.46px;width:65.60px;height:16.33px;background:#dfe7f6;"></div>
<div class="b" style="left:653.40px;top:288.46px;width:65.40px;height:16.33px;background:#dfe7f6;"></div>
<div class="b" style="left:718.80px;top:288.46px;width:65.50px;height:16.33px;background:#dfe7f6;"></div>
<div class="b" style="left:784.30px;top:288.46px;width:65.10px;height:16.33px;background:#dff3df;"></div>
<div class="b" style="left:849.40px;top:288.46px;width:65.40px;height:16.33px;background:#dff3df;"></div>
<div class="b" style="left:157.00px;top:304.80px;width:130.70px;height:16.33px;background:#f7f7f7;"></div>
<div class="b" style="left:914.80px;top:304.80px;width:64.20px;height:16.33px;background:#f7f7f7;"></div>
<div class="b" style="left:287.70px;top:304.80px;width:65.00px;height:16.33px;background:#fef5d4;"></div>
<div class="b" style="left:352.70px;top:304.80px;width:39.50px;height:16.33px;background:#fef5d4;"></div>
<div class="b" style="left:392.20px;top:304.80px;width:65.60px;height:16.33px;background:#fef5d4;"></div>
<div class="b" style="left:457.80px;top:304.80px;width:64.50px;height:16.33px;background:#fef5d4;"></div>
<div class="b" style="left:522.30px;top:304.80px;width:65.50px;height:16.33px;background:#dfe7f6;"></div>
<div class="b" style="left:587.80px;top:304.80px;width:65.60px;height:16.33px;background:#dfe7f6;"></div>
<div class="b" style="left:653.40px;top:304.80px;width:65.40px;height:16.33px;background:#dfe7f6;"></div>
<div class="b" style="left:718.80px;top:304.80px;width:65.50px;height:16.33px;background:#dfe7f6;"></div>
<div class="b" style="left:784.30px;top:304.80px;width:65.10px;height:16.33px;background:#dff3df;"></div>
<div class="b" style="left:849.40px;top:304.80px;width:65.40px;height:16.33px;background:#dff3df;"></div>
<div class="b" style="left:157.00px;top:173.73px;width:822.00px;height:1.00px;background:#e9e7e1;"></div>
<div class="t" style="left:158.60px;top:163.39px;font-size:7.450px;line-height:7.450px;color:#555;font-weight:normal;">26</div>
<div class="t" style="left:184.20px;top:163.39px;font-size:7.450px;line-height:7.450px;color:#555;font-weight:normal;">Bachmayr &amp; Co.</div>
<div class="t" style="left:289.30px;top:163.39px;font-size:7.450px;line-height:7.450px;color:#555;font-weight:normal;">Musterstraße</div>
<div class="t" style="left:355.00px;top:163.39px;font-size:7.450px;line-height:7.450px;color:#555;font-weight:normal;">8010</div>
<div class="t" style="left:394.10px;top:163.39px;font-size:7.450px;line-height:7.450px;color:#555;font-weight:normal;">Graz</div>
<div class="t" style="left:459.80px;top:163.39px;font-size:7.450px;line-height:7.450px;color:#555;font-weight:normal;">Österreich</div>
<div class="t" style="left:524.10px;top:163.39px;font-size:7.450px;line-height:7.450px;color:#555;font-weight:normal;">Muster</div>
<div class="t" style="left:589.70px;top:163.39px;font-size:7.450px;line-height:7.450px;color:#555;font-weight:normal;">Melanie</div>
<div class="t" style="left:655.50px;top:163.39px;font-size:7.450px;line-height:7.450px;color:#555;font-weight:normal;">m.m@bachmayr...</div>
<div class="t" style="left:720.50px;top:163.39px;font-size:7.450px;line-height:7.450px;color:#555;font-weight:normal;">444-444-444</div>
<svg class="b" style="left:940.00px;top:159.80px" width="13" height="13" viewBox="0 0 13 13"><circle cx="6.2" cy="6.3" r="4.3" fill="none" stroke="#ec6c6c" stroke-width="1"/><path d="M4 6.3 H8.4" stroke="#ec6c6c" stroke-width="1.1"/></svg>
<div class="b" style="left:157.00px;top:190.07px;width:822.00px;height:1.00px;background:#e9e7e1;"></div>
<div class="t" style="left:158.60px;top:179.73px;font-size:7.450px;line-height:7.450px;color:#555;font-weight:normal;">33</div>
<div class="t" style="left:184.20px;top:179.73px;font-size:7.450px;line-height:7.450px;color:#555;font-weight:normal;">Berger GmbH</div>
<div class="t" style="left:289.30px;top:179.73px;font-size:7.450px;line-height:7.450px;color:#555;font-weight:normal;">Mustergasse</div>
<div class="t" style="left:355.00px;top:179.73px;font-size:7.450px;line-height:7.450px;color:#555;font-weight:normal;">8020</div>
<div class="t" style="left:394.10px;top:179.73px;font-size:7.450px;line-height:7.450px;color:#555;font-weight:normal;">Graz</div>
<div class="t" style="left:459.80px;top:179.73px;font-size:7.450px;line-height:7.450px;color:#555;font-weight:normal;">Österreich</div>
<div class="t" style="left:524.10px;top:179.73px;font-size:7.450px;line-height:7.450px;color:#555;font-weight:normal;">Mustermann</div>
<div class="t" style="left:589.70px;top:179.73px;font-size:7.450px;line-height:7.450px;color:#555;font-weight:normal;">Max</div>
<div class="t" style="left:655.50px;top:179.73px;font-size:7.450px;line-height:7.450px;color:#555;font-weight:normal;">m.m@berger.com</div>
<div class="t" style="left:720.50px;top:179.73px;font-size:7.450px;line-height:7.450px;color:#555;font-weight:normal;">555-555-555</div>
<svg class="b" style="left:940.00px;top:176.13px" width="13" height="13" viewBox="0 0 13 13"><circle cx="6.2" cy="6.3" r="4.3" fill="none" stroke="#ec6c6c" stroke-width="1"/><path d="M4 6.3 H8.4" stroke="#ec6c6c" stroke-width="1.1"/></svg>
<div class="b" style="left:157.00px;top:206.40px;width:822.00px;height:1.00px;background:#e9e7e1;"></div>
<div class="t" style="left:158.60px;top:196.06px;font-size:7.450px;line-height:7.450px;color:#555;font-weight:normal;">32</div>
<div class="t" style="left:184.20px;top:196.06px;font-size:7.450px;line-height:7.450px;color:#555;font-weight:normal;">Fiedler &amp; Söhne</div>
<div class="t" style="left:289.30px;top:196.06px;font-size:7.450px;line-height:7.450px;color:#555;font-weight:normal;">Musterallee</div>
<div class="t" style="left:355.00px;top:196.06px;font-size:7.450px;line-height:7.450px;color:#555;font-weight:normal;">80331</div>
<div class="t" style="left:394.10px;top:196.06px;font-size:7.450px;line-height:7.450px;color:#555;font-weight:normal;">München</div>
<div class="t" style="left:459.80px;top:196.06px;font-size:7.450px;line-height:7.450px;color:#555;font-weight:normal;">Deutschland</div>
<div class="t" style="left:524.10px;top:196.06px;font-size:7.450px;line-height:7.450px;color:#555;font-weight:normal;">Normalverbrauc...</div>
<div class="t" style="left:589.70px;top:196.06px;font-size:7.450px;line-height:7.450px;color:#555;font-weight:normal;">Otto</div>
<div class="t" style="left:655.50px;top:196.06px;font-size:7.450px;line-height:7.450px;color:#555;font-weight:normal;">o.n@fiedler.de</div>
<div class="t" style="left:720.50px;top:196.06px;font-size:7.450px;line-height:7.450px;color:#555;font-weight:normal;">666-666-666</div>
<svg class="b" style="left:940.00px;top:192.47px" width="13" height="13" viewBox="0 0 13 13"><circle cx="6.2" cy="6.3" r="4.3" fill="none" stroke="#ec6c6c" stroke-width="1"/><path d="M4 6.3 H8.4" stroke="#ec6c6c" stroke-width="1.1"/></svg>
<div class="b" style="left:157.00px;top:222.73px;width:822.00px;height:1.00px;background:#e9e7e1;"></div>
<div class="t" style="left:158.60px;top:212.39px;font-size:7.450px;line-height:7.450px;color:#555;font-weight:normal;">27</div>
<div class="t" style="left:184.20px;top:212.39px;font-size:7.450px;line-height:7.450px;color:#555;font-weight:normal;">Greengate Energy</div>
<div class="t" style="left:289.30px;top:212.39px;font-size:7.450px;line-height:7.450px;color:#555;font-weight:normal;">Musterring</div>
<div class="t" style="left:355.00px;top:212.39px;font-size:7.450px;line-height:7.450px;color:#555;font-weight:normal;">8000</div>
<div class="t" style="left:394.10px;top:212.39px;font-size:7.450px;line-height:7.450px;color:#555;font-weight:normal;">Zürich</div>
<div class="t" style="left:459.80px;top:212.39px;font-size:7.450px;line-height:7.450px;color:#555;font-weight:normal;">Schweiz</div>
<div class="t" style="left:524.10px;top:212.39px;font-size:7.450px;line-height:7.450px;color:#555;font-weight:normal;">Müller</div>
<div class="t" style="left:589.70px;top:212.39px;font-size:7.450px;line-height:7.450px;color:#555;font-weight:normal;">Erika</div>
<div class="t" style="left:655.50px;top:212.39px;font-size:7.450px;line-height:7.450px;color:#555;font-weight:normal;">e.m@greengate....</div>
<div class="t" style="left:720.50px;top:212.39px;font-size:7.450px;line-height:7.450px;color:#555;font-weight:normal;">777-777-777</div>
<svg class="b" style="left:940.00px;top:208.80px" width="13" height="13" viewBox="0 0 13 13"><circle cx="6.2" cy="6.3" r="4.3" fill="none" stroke="#ec6c6c" stroke-width="1"/><path d="M4 6.3 H8.4" stroke="#ec6c6c" stroke-width="1.1"/></svg>
<div class="b" style="left:157.00px;top:239.06px;width:822.00px;height:1.00px;background:#e9e7e1;"></div>
<div class="t" style="left:158.60px;top:228.73px;font-size:7.450px;line-height:7.450px;color:#555;font-weight:normal;">34</div>
<div class="t" style="left:184.20px;top:228.73px;font-size:7.450px;line-height:7.450px;color:#555;font-weight:normal;">Gruber</div>
<div class="t" style="left:289.30px;top:228.73px;font-size:7.450px;line-height:7.450px;color:#555;font-weight:normal;">Hauptstraße</div>
<div class="t" style="left:355.00px;top:228.73px;font-size:7.450px;line-height:7.450px;color:#555;font-weight:normal;">80000</div>
<div class="t" style="left:394.10px;top:228.73px;font-size:7.450px;line-height:7.450px;color:#555;font-weight:normal;">Musterhausen</div>
<div class="t" style="left:459.80px;top:228.73px;font-size:7.450px;line-height:7.450px;color:#555;font-weight:normal;">Deutschland</div>
<div class="t" style="left:524.10px;top:228.73px;font-size:7.450px;line-height:7.450px;color:#555;font-weight:normal;">Gruber</div>
<div class="t" style="left:589.70px;top:228.73px;font-size:7.450px;line-height:7.450px;color:#555;font-weight:normal;">Stefan</div>
<div class="t" style="left:655.50px;top:228.73px;font-size:7.450px;line-height:7.450px;color:#555;font-weight:normal;">stefan.gruber@...</div>
<div class="t" style="left:720.50px;top:228.73px;font-size:7.450px;line-height:7.450px;color:#555;font-weight:normal;">888-888-888</div>
<svg class="b" style="left:940.00px;top:225.13px" width="13" height="13" viewBox="0 0 13 13"><circle cx="6.2" cy="6.3" r="4.3" fill="none" stroke="#ec6c6c" stroke-width="1"/><path d="M4 6.3 H8.4" stroke="#ec6c6c" stroke-width="1.1"/></svg>
<div class="b" style="left:157.00px;top:255.40px;width:822.00px;height:1.00px;background:#e9e7e1;"></div>
<div class="t" style="left:158.60px;top:245.06px;font-size:7.450px;line-height:7.450px;color:#555;font-weight:normal;">36</div>
<div class="t" style="left:184.20px;top:245.06px;font-size:7.450px;line-height:7.450px;color:#555;font-weight:normal;">Herr &amp; Frau Klein Kinderspi...</div>
<div class="t" style="left:289.30px;top:245.06px;font-size:7.450px;line-height:7.450px;color:#555;font-weight:normal;">Lange Gasse</div>
<div class="t" style="left:355.00px;top:245.06px;font-size:7.450px;line-height:7.450px;color:#555;font-weight:normal;">8020</div>
<div class="t" style="left:394.10px;top:245.06px;font-size:7.450px;line-height:7.450px;color:#555;font-weight:normal;">Graz</div>
<div class="t" style="left:459.80px;top:245.06px;font-size:7.450px;line-height:7.450px;color:#555;font-weight:normal;">Österreich</div>
<div class="t" style="left:524.10px;top:245.06px;font-size:7.450px;line-height:7.450px;color:#555;font-weight:normal;">Klein</div>
<div class="t" style="left:589.70px;top:245.06px;font-size:7.450px;line-height:7.450px;color:#555;font-weight:normal;">Stefanie</div>
<div class="t" style="left:655.50px;top:245.06px;font-size:7.450px;line-height:7.450px;color:#555;font-weight:normal;">s.k@kinderspiel...</div>
<div class="t" style="left:720.50px;top:245.06px;font-size:7.450px;line-height:7.450px;color:#555;font-weight:normal;">999-999-999</div>
<svg class="b" style="left:940.00px;top:241.46px" width="13" height="13" viewBox="0 0 13 13"><circle cx="6.2" cy="6.3" r="4.3" fill="none" stroke="#ec6c6c" stroke-width="1"/><path d="M4 6.3 H8.4" stroke="#ec6c6c" stroke-width="1.1"/></svg>
<div class="b" style="left:157.00px;top:271.73px;width:822.00px;height:1.00px;background:#e9e7e1;"></div>
<div class="t" style="left:158.60px;top:261.39px;font-size:7.450px;line-height:7.450px;color:#555;font-weight:normal;">35</div>
<div class="t" style="left:184.20px;top:261.39px;font-size:7.450px;line-height:7.450px;color:#555;font-weight:normal;">HLW Tiefbau</div>
<div class="t" style="left:289.30px;top:261.39px;font-size:7.450px;line-height:7.450px;color:#555;font-weight:normal;">Musterallee</div>
<div class="t" style="left:355.00px;top:261.39px;font-size:7.450px;line-height:7.450px;color:#555;font-weight:normal;">10115</div>
<div class="t" style="left:394.10px;top:261.39px;font-size:7.450px;line-height:7.450px;color:#555;font-weight:normal;">Berlin</div>
<div class="t" style="left:459.80px;top:261.39px;font-size:7.450px;line-height:7.450px;color:#555;font-weight:normal;">Deutschland</div>
<div class="t" style="left:524.10px;top:261.39px;font-size:7.450px;line-height:7.450px;color:#555;font-weight:normal;">Bauer</div>
<div class="t" style="left:589.70px;top:261.39px;font-size:7.450px;line-height:7.450px;color:#555;font-weight:normal;">Max</div>
<div class="t" style="left:655.50px;top:261.39px;font-size:7.450px;line-height:7.450px;color:#555;font-weight:normal;">max.bauer@hlw....</div>
<div class="t" style="left:720.50px;top:261.39px;font-size:7.450px;line-height:7.450px;color:#555;font-weight:normal;">111-111-111</div>
<svg class="b" style="left:940.00px;top:257.80px" width="13" height="13" viewBox="0 0 13 13"><circle cx="6.2" cy="6.3" r="4.3" fill="none" stroke="#ec6c6c" stroke-width="1"/><path d="M4 6.3 H8.4" stroke="#ec6c6c" stroke-width="1.1"/></svg>
<div class="b" style="left:157.00px;top:288.06px;width:822.00px;height:1.00px;background:#e9e7e1;"></div>
<div class="t" style="left:158.60px;top:277.72px;font-size:7.450px;line-height:7.450px;color:#555;font-weight:normal;">29</div>
<div class="t" style="left:184.20px;top:277.72px;font-size:7.450px;line-height:7.450px;color:#555;font-weight:normal;">Johann Berger</div>
<div class="t" style="left:289.30px;top:277.72px;font-size:7.450px;line-height:7.450px;color:#555;font-weight:normal;">Dorfstraße</div>
<div class="t" style="left:355.00px;top:277.72px;font-size:7.450px;line-height:7.450px;color:#555;font-weight:normal;">1000</div>
<div class="t" style="left:394.10px;top:277.72px;font-size:7.450px;line-height:7.450px;color:#555;font-weight:normal;">Musterdorf</div>
<div class="t" style="left:459.80px;top:277.72px;font-size:7.450px;line-height:7.450px;color:#555;font-weight:normal;">Schweiz</div>
<div class="t" style="left:524.10px;top:277.72px;font-size:7.450px;line-height:7.450px;color:#555;font-weight:normal;">Berger</div>
<div class="t" style="left:589.70px;top:277.72px;font-size:7.450px;line-height:7.450px;color:#555;font-weight:normal;">Johann</div>
<div class="t" style="left:655.50px;top:277.72px;font-size:7.450px;line-height:7.450px;color:#555;font-weight:normal;">johann.berger@...</div>
<div class="t" style="left:720.50px;top:277.72px;font-size:7.450px;line-height:7.450px;color:#555;font-weight:normal;">222-222-222</div>
<svg class="b" style="left:940.00px;top:274.13px" width="13" height="13" viewBox="0 0 13 13"><circle cx="6.2" cy="6.3" r="4.3" fill="none" stroke="#ec6c6c" stroke-width="1"/><path d="M4 6.3 H8.4" stroke="#ec6c6c" stroke-width="1.1"/></svg>
<div class="b" style="left:157.00px;top:304.40px;width:822.00px;height:1.00px;background:#e9e7e1;"></div>
<div class="t" style="left:158.60px;top:294.06px;font-size:7.450px;line-height:7.450px;color:#555;font-weight:normal;">31</div>
<div class="t" style="left:184.20px;top:294.06px;font-size:7.450px;line-height:7.450px;color:#555;font-weight:normal;">Leitenberg &amp; Jung</div>
<div class="t" style="left:289.30px;top:294.06px;font-size:7.450px;line-height:7.450px;color:#555;font-weight:normal;">Feldweg</div>
<div class="t" style="left:355.00px;top:294.06px;font-size:7.450px;line-height:7.450px;color:#555;font-weight:normal;">1220</div>
<div class="t" style="left:394.10px;top:294.06px;font-size:7.450px;line-height:7.450px;color:#555;font-weight:normal;">Wien</div>
<div class="t" style="left:459.80px;top:294.06px;font-size:7.450px;line-height:7.450px;color:#555;font-weight:normal;">Österreich</div>
<div class="t" style="left:524.10px;top:294.06px;font-size:7.450px;line-height:7.450px;color:#555;font-weight:normal;">Leitenberg</div>
<div class="t" style="left:589.70px;top:294.06px;font-size:7.450px;line-height:7.450px;color:#555;font-weight:normal;">Manuela</div>
<div class="t" style="left:655.50px;top:294.06px;font-size:7.450px;line-height:7.450px;color:#555;font-weight:normal;">manuela@leiten...</div>
<div class="t" style="left:720.50px;top:294.06px;font-size:7.450px;line-height:7.450px;color:#555;font-weight:normal;">333-333-333</div>
<svg class="b" style="left:940.00px;top:290.46px" width="13" height="13" viewBox="0 0 13 13"><circle cx="6.2" cy="6.3" r="4.3" fill="none" stroke="#ec6c6c" stroke-width="1"/><path d="M4 6.3 H8.4" stroke="#ec6c6c" stroke-width="1.1"/></svg>
<div class="t" style="left:158.60px;top:310.39px;font-size:7.450px;line-height:7.450px;color:#555;font-weight:normal;">28</div>
<div class="t" style="left:184.20px;top:310.39px;font-size:7.450px;line-height:7.450px;color:#555;font-weight:normal;">Saveurs Fleury</div>
<div class="t" style="left:289.30px;top:310.39px;font-size:7.450px;line-height:7.450px;color:#555;font-weight:normal;">rue de motif</div>
<div class="t" style="left:355.00px;top:310.39px;font-size:7.450px;line-height:7.450px;color:#555;font-weight:normal;">75012</div>
<div class="t" style="left:394.10px;top:310.39px;font-size:7.450px;line-height:7.450px;color:#555;font-weight:normal;">Paris</div>
<div class="t" style="left:459.80px;top:310.39px;font-size:7.450px;line-height:7.450px;color:#555;font-weight:normal;">Frankreich</div>
<div class="t" style="left:524.10px;top:310.39px;font-size:7.450px;line-height:7.450px;color:#555;font-weight:normal;">Poissonnier</div>
<div class="t" style="left:589.70px;top:310.39px;font-size:7.450px;line-height:7.450px;color:#555;font-weight:normal;">Mathéo</div>
<div class="t" style="left:655.50px;top:310.39px;font-size:7.450px;line-height:7.450px;color:#555;font-weight:normal;"></div>
<div class="t" style="left:720.50px;top:310.39px;font-size:7.450px;line-height:7.450px;color:#555;font-weight:normal;"></div>
<svg class="b" style="left:940.00px;top:306.80px" width="13" height="13" viewBox="0 0 13 13"><circle cx="6.2" cy="6.3" r="4.3" fill="none" stroke="#ec6c6c" stroke-width="1"/><path d="M4 6.3 H8.4" stroke="#ec6c6c" stroke-width="1.1"/></svg>
<div class="b" style="left:287.20px;top:157.20px;width:1.00px;height:369.80px;background:#dcdcdc;"></div>
<svg class="b" style="left:150.00px;top:308.00px" width="6" height="11" viewBox="0 0 6 11"><path d="M4.6 1.8 L2 5.5 L4.6 9.2" fill="none" stroke="#d8d8d8" stroke-width="0.8"/></svg>
<div class="b" style="left:157.00px;top:526.60px;width:822.00px;height:1.00px;background:#dcdcdc;"></div>
<svg class="b" style="left:160.00px;top:532.00px" width="14" height="13" viewBox="0 0 14 13"><path d="M7 2 L2.5 6.5 L7 11 M11 2 L6.5 6.5 L11 11" fill="none" stroke="#b0b0b0" stroke-width="0.9"/></svg>
<svg class="b" style="left:182.00px;top:532.00px" width="12" height="13" viewBox="0 0 12 13"><path d="M7 2 L2.5 6.5 L7 11" fill="none" stroke="#b0b0b0" stroke-width="0.9"/></svg>
<div class="b" style="left:200.00px;top:534.00px;width:1.00px;height:10.00px;background:#e0e0e0;"></div>
<div class="t" style="left:210.70px;top:535.04px;font-size:7.400px;line-height:7.400px;color:#555;font-weight:normal;">Seite</div>
<div class="b" style="left:238.80px;top:531.60px;width:25.50px;height:13.50px;background:#fff;border:1px solid #d6d6d6;border-radius:1px;box-sizing:border-box;"></div>
<div class="t" style="left:243.50px;top:535.04px;font-size:7.400px;line-height:7.400px;color:#444;font-weight:normal;">1</div>
<div class="t" style="left:270.70px;top:535.04px;font-size:7.400px;line-height:7.400px;color:#555;font-weight:normal;">von 1</div>
<div class="b" style="left:299.30px;top:534.00px;width:1.00px;height:10.00px;background:#e0e0e0;"></div>
<svg class="b" style="left:309.00px;top:532.00px" width="12" height="13" viewBox="0 0 12 13"><path d="M3.5 2 L8 6.5 L3.5 11" fill="none" stroke="#b0b0b0" stroke-width="0.9"/></svg>
<svg class="b" style="left:327.00px;top:532.00px" width="14" height="13" viewBox="0 0 14 13"><path d="M3 2 L7.5 6.5 L3 11 M7 2 L11.5 6.5 L7 11" fill="none" stroke="#b0b0b0" stroke-width="0.9"/></svg>
<div class="b" style="left:346.80px;top:534.00px;width:1.00px;height:10.00px;background:#e0e0e0;"></div>
<svg class="b" style="left:354.00px;top:532.00px" width="13" height="13" viewBox="0 0 13 13"><path d="M10.4 4.4 A4.7 4.7 0 1 0 11.2 7.5" fill="none" stroke="#aaa" stroke-width="1"/><path d="M8.3 4.3 L11 4.3 L11 1.6" fill="none" stroke="#aaa" stroke-width="0.9"/></svg>
<div class="t" style="left:744.40px;top:534.99px;font-size:7.450px;line-height:7.450px;color:#555;font-weight:normal;">Ansicht 1 - 10 von 10</div>
<div class="b" style="left:823.00px;top:534.00px;width:1.00px;height:10.00px;background:#e0e0e0;"></div>
<div class="t" style="left:834.00px;top:534.99px;font-size:7.450px;line-height:7.450px;color:#555;font-weight:normal;">Zeige</div>
<div class="b" style="left:862.40px;top:531.40px;width:34.80px;height:14.10px;background:#fff;border:1px solid #d6d6d6;border-radius:1px;box-sizing:border-box;"></div>
<div class="t" style="left:866.00px;top:535.31px;font-size:7.900px;line-height:7.900px;color:#444;font-weight:normal;">20</div>
<svg class="b" style="left:884.00px;top:534.00px" width="10" height="8" viewBox="0 0 10 8"><path d="M1.5 2.5 L4.8 5.6 L8.1 2.5" fill="none" stroke="#999" stroke-width="0.8"/></svg>
<div class="t" style="left:907.00px;top:534.99px;font-size:7.450px;line-height:7.450px;color:#555;font-weight:normal;">Elemente pro Seite</div>
<svg class="b" style="left:217.00px;top:114.00px" width="18" height="22" viewBox="0 0 18 22"><path d="M6.4 11.8 L6.4 4.9 Q6.4 3.3 8 3.3 Q9.6 3.3 9.6 4.9 L9.6 7.3 L12.6 7.5 Q15.4 7.9 15.4 10 L15.4 15.6 Q15.4 18.3 12.4 18.3 L10.6 18.3 Q9.4 18.3 8.6 17.5 L3.7 12.7 Q3.1 12 3.7 11.3 Q4.5 10.6 5.4 11.2 Z" fill="#fff" stroke="#3a3d42" stroke-width="1" stroke-linejoin="round"/><path d="M7.2 5 L7.2 11" stroke="#b8bcc2" stroke-width="1"/></svg>
</div></body></html>
